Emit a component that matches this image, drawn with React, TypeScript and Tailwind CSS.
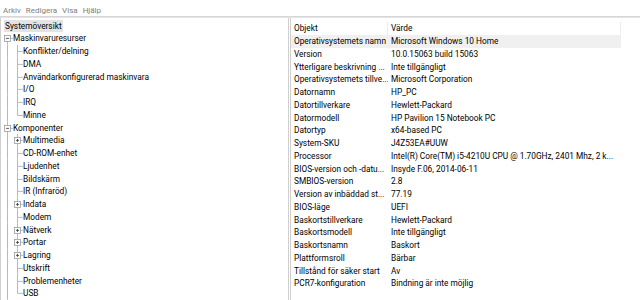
import React from 'react'

type TreeRow = {
  label: string
  level: 0 | 1 | 2
  box?: 'plus' | 'minus'
  last?: boolean
  first?: boolean
  selected?: boolean
}

const tree: TreeRow[] = [
  { label: 'Systemöversikt', level: 0, selected: true },
  { label: 'Maskinvaruresurser', level: 1, box: 'minus', first: true },
  { label: 'Konflikter/delning', level: 2 },
  { label: 'DMA', level: 2 },
  { label: 'Användarkonfigurerad maskinvara', level: 2 },
  { label: 'I/O', level: 2 },
  { label: 'IRQ', level: 2 },
  { label: 'Minne', level: 2, last: true },
  { label: 'Komponenter', level: 1, box: 'minus' },
  { label: 'Multimedia', level: 2, box: 'plus' },
  { label: 'CD-ROM-enhet', level: 2 },
  { label: 'Ljudenhet', level: 2 },
  { label: 'Bildskärm', level: 2 },
  { label: 'IR (Infraröd)', level: 2 },
  { label: 'Indata', level: 2, box: 'plus' },
  { label: 'Modem', level: 2 },
  { label: 'Nätverk', level: 2, box: 'plus' },
  { label: 'Portar', level: 2, box: 'plus' },
  { label: 'Lagring', level: 2, box: 'plus' },
  { label: 'Utskrift', level: 2 },
  { label: 'Problemenheter', level: 2 },
  { label: 'USB', level: 2, last: true },
]

const rows: [string, string][] = [
  ['Operativsystemets namn', 'Microsoft Windows 10 Home'],
  ['Version', '10.0.15063 build 15063'],
  ['Ytterligare beskrivning ...', 'Inte tillgängligt'],
  ['Operativsystemets tillve...', 'Microsoft Corporation'],
  ['Datornamn', 'HP_PC'],
  ['Datortillverkare', 'Hewlett-Packard'],
  ['Datormodell', 'HP Pavilion 15 Notebook PC'],
  ['Datortyp', 'x64-based PC'],
  ['System-SKU', 'J4Z53EA#UUW'],
  ['Processor', 'Intel(R) Core(TM) i5-4210U CPU @ 1.70GHz, 2401 Mhz, 2 k...'],
  ['BIOS-version och -datu...', 'Insyde F.06, 2014-06-11'],
  ['SMBIOS-version', '2.8'],
  ['Version av inbäddad st...', '77.19'],
  ['BIOS-läge', 'UEFI'],
  ['Baskortstillverkare', 'Hewlett-Packard'],
  ['Baskortsmodell', 'Inte tillgängligt'],
  ['Baskortsnamn', 'Baskort'],
  ['Plattformsroll', 'Bärbar'],
  ['Tillstånd för säker start', 'Av'],
  ['PCR7-konfiguration', 'Bindning är inte möjlig'],
]

const LINE = '#b9b9b9'

// tree connectors for one row, drawn in a small svg gutter
function Gutter({ row }: { row: TreeRow }) {
  const h = 12.75
  const mid = h / 2
  const x1 = 6.5
  const x2 = 16.5
  const w = row.level === 1 ? 12 : 22
  return (
    <svg width={w} height={h} className="shrink-0 overflow-visible">
      {/* level 1 trunk */}
      <line x1={x1} y1={row.level === 1 && row.first ? mid : 0} x2={x1} y2={h} stroke={LINE} strokeWidth="1" />
      {row.level === 1 && <line x1={x1} y1={mid} x2={12} y2={mid} stroke={LINE} />}
      {row.level === 2 && (
        <>
          <line x1={x2} y1={0} x2={x2} y2={row.last ? mid : h} stroke={LINE} />
          <line x1={x2} y1={mid} x2={22} y2={mid} stroke={LINE} />
        </>
      )}
      {row.box && <Box cx={row.level === 1 ? x1 : x2} cy={mid} plus={row.box === 'plus'} />}
    </svg>
  )
}

function Box({ cx, cy, plus }: { cx: number; cy: number; plus: boolean }) {
  return (
    <g>
      <rect x={cx - 3} y={cy - 3} width="6" height="6" fill="#fff" stroke="#9a9a9a" strokeWidth="0.8" />
      <line x1={cx - 1.5} y1={cy} x2={cx + 1.5} y2={cy} stroke="#333" strokeWidth="0.8" />
      {plus && <line x1={cx} y1={cy - 1.5} x2={cx} y2={cy + 1.5} stroke="#333" strokeWidth="0.8" />}
    </g>
  )
}

export default function App() {
  return (
    <div
      className="w-[640px] h-[300px] overflow-hidden bg-white text-black flex flex-col"
      style={{ fontFamily: 'Roboto, Lato, sans-serif' }}
    >
      {/* menu */}
      <div className="h-[16px] flex items-end gap-[5px] pl-[3px] pb-[1px] text-[8px] text-[#808080] leading-none">
        <span>Arkiv</span>
        <span>Redigera</span>
        <span>Visa</span>
        <span>Hjälp</span>
      </div>
      <div className="h-[2px] bg-[#e4e4e4] border-t border-[#d6d6d6]" />

      <div className="flex-1 flex min-h-0 text-[8.3px] leading-[12.75px]">
        {/* tree pane */}
        <div className="w-[289px] border-l border-r border-[#cfcfcf] pt-[1.5px] overflow-hidden">
          {tree.map((r) => (
            <div key={r.label} className="h-[12.75px] flex items-center whitespace-nowrap">
              {r.level === 0 ? (
                <span className={'ml-[3px] px-[1px] h-full ' + (r.selected ? 'bg-[#e3e3e3]' : '')}>
                  {r.label}
                </span>
              ) : (
                <>
                  <Gutter row={r} />
                  <span>{r.label}</span>
                </>
              )}
            </div>
          ))}
        </div>

        <div className="w-[1px]" />

        {/* list pane */}
        <div className="flex-1 border-l border-[#cfcfcf] pt-[4px] overflow-hidden">
          <div className="h-[13px] flex whitespace-nowrap leading-[13px]">
            <div className="w-[97px] pl-[3px] border-r border-[#ececec]">Objekt</div>
            <div className="w-[233px] pl-[3px] border-r border-[#ececec]">Värde</div>
          </div>
          {rows.map(([k, v], i) => (
            <div
              key={k}
              className={'h-[12.75px] w-[330px] flex whitespace-nowrap ' + (i === 0 ? 'bg-[#f0f0f0]' : '')}
            >
              <div className="w-[97px] pl-[3px] overflow-hidden">{k}</div>
              <div className="w-[233px] pl-[3px] overflow-hidden">{v}</div>
            </div>
          ))}
        </div>
      </div>
    </div>
  )
}
